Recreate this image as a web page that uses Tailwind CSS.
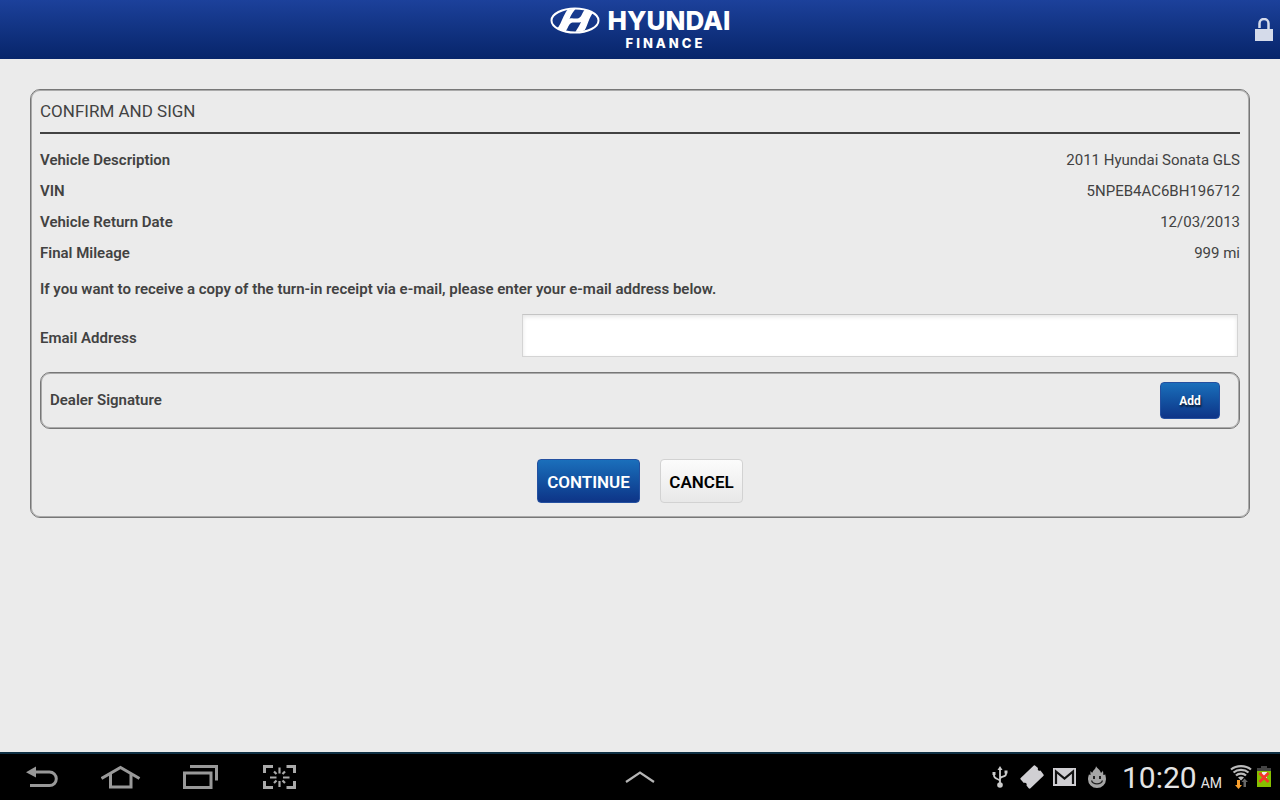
<!DOCTYPE html>
<html lang="en">
<head>
    <meta charset="UTF-8">
    <meta name="viewport" content="width=device-width, initial-scale=1.0">
    <title>Confirm and Sign</title>
    <script src="https://cdn.jsdelivr.net/npm/@tailwindcss/browser@4"></script>
</head>
<body class="min-h-screen flex flex-col bg-[#ebebeb] text-[#424242] text-[15px] leading-5 font-['Roboto',sans-serif]">
    <!-- Header -->
    <header class="h-[59px] shrink-0 grid grid-cols-[1fr_auto_1fr] bg-linear-to-b from-[#1c419b] to-[#07256a] text-white">
        <div class="col-start-2 flex gap-2 pt-[7px]">
            <svg class="w-[50px] h-[27px]" viewBox="0 0 50 27" fill="none" aria-hidden="true">
                <ellipse cx="25" cy="13.5" rx="23.5" ry="12" stroke="#fff" stroke-width="2"/>
                <path fill="#fff" d="M17 3.2C13 9 12 15 7.500 21.200C10 23 12.500 24 15.500 24.500C18 21 18.500 17.500 21 16C24 14.500 28 16.500 31 15C29.500 18.500 27.500 21.500 25.500 24.800C29 24.800 32 24.500 34.500 23.600C38 18 38.500 11.500 43 5.800C40.500 4 37.500 3 35 2.500C31.500 6 32 10 28.500 11.200C25 12.300 22 10.300 19.500 11.800C21 8 23 5 25.500 2C22 2 19 2.500 17 3.200Z"/>
            </svg>
            <div class="flex flex-col font-['Inter',sans-serif]">
                <span class="h-7 text-[26px] leading-[27px] font-extrabold">HYUNDAI</span>
                <span class="pl-[18px] text-[13px] leading-4 font-extrabold tracking-[3px]">FINANCE</span>
            </div>
        </div>
        <button type="button" aria-label="Unlock" class="justify-self-end self-center pr-[7px]">
            <svg class="w-[18px] h-6" viewBox="0 0 18 24" fill="none" aria-hidden="true">
                <path d="M4.500 10V5.500a4.500 4.500 0 0 1 9 0v6" stroke="#d5dbea" stroke-width="2.500"/>
                <path d="M0 11h18v12H0z" fill="#d5dbea"/>
            </svg>
        </button>
    </header>

    <!-- Confirm form -->
    <main class="flex-1 p-[30px]">
        <form class="border border-[#777] inset-shadow-[0_0_0_1px_#aaa] rounded-[10px] pt-px px-[9px] pb-[14px]">
            <h1 class="h-[43px] flex items-center pb-0.5 border-b-2 border-[#424242] text-[17px]">CONFIRM AND SIGN</h1>
            <dl class="pt-[10px]">
                <div class="h-[31px] flex items-center justify-between">
                    <dt class="font-semibold">Vehicle Description</dt>
                    <dd>2011 Hyundai Sonata GLS</dd>
                </div>
                <div class="h-[31px] flex items-center justify-between">
                    <dt class="font-semibold">VIN</dt>
                    <dd>5NPEB4AC6BH196712</dd>
                </div>
                <div class="h-[31px] flex items-center justify-between">
                    <dt class="font-semibold">Vehicle Return Date</dt>
                    <dd>12/03/2013</dd>
                </div>
                <div class="h-[31px] flex items-center justify-between">
                    <dt class="font-semibold">Final Mileage</dt>
                    <dd>999 mi</dd>
                </div>
            </dl>
            <p class="pt-[11px] font-semibold">If you want to receive a copy of the turn-in receipt via e-mail, please enter your e-mail address below.</p>
            <div class="mt-[15px] flex items-center">
                <label for="email" class="w-2/5 pt-1 font-semibold">Email Address</label>
                <input id="email" type="email" class="flex-1 mx-0.5 h-[43px] px-2 bg-white border border-[#d4d4d4] border-t-[#c4c4c4] shadow-[inset_0_2px_4px_rgba(0,0,0,0.1)] outline-none">
            </div>
            <div class="mt-[15px] pl-[9px] pr-[19px] h-[57px] flex items-center justify-between border border-[#777] inset-shadow-[0_0_0_1px_#aaa] rounded-[10px]">
                <span class="pb-0.5 font-semibold">Dealer Signature</span>
                <button type="button" class="w-[60px] h-[37px] rounded border border-[#2450a0] bg-linear-to-b from-[#1b6fbb] to-[#0e3487] text-white text-xs font-bold text-shadow-[1px_2px_2px_rgba(0,0,0,0.7)]">Add</button>
            </div>
            <div class="mt-[30px] flex justify-center gap-5 text-[17px] font-semibold">
                <button type="submit" class="h-11 w-[103px] pt-0.5 rounded border border-[#2450a0] bg-linear-to-b from-[#1b6fbb] to-[#0e3487] text-white">CONTINUE</button>
                <button type="button" class="h-11 w-[83px] pt-0.5 rounded border border-[#d2d2d2] bg-linear-to-b from-[#fcfcfc] to-[#e8e8e8] text-black">CANCEL</button>
            </div>
        </form>
    </main>

    <!-- System bar -->
    <footer class="h-12 shrink-0 grid grid-cols-[1fr_auto_1fr] items-center bg-black border-t-2 border-[#0f3044] text-[#e4e4e4]">
        <nav class="flex items-center gap-[42px] pl-[25px]">
            <button type="button" aria-label="Back">
                <svg class="w-[34px] h-6" viewBox="0 0 34 24" fill="none" aria-hidden="true">
                    <path d="M9 7h15.500a6.800 6.800 0 0 1 0 13.600H5" stroke="#999" stroke-width="3"/>
                    <path d="M1 7.200 11 1.500v11z" fill="#999"/>
                </svg>
            </button>
            <button type="button" aria-label="Home">
                <svg class="w-10 h-6" viewBox="0 0 40 24" fill="none" stroke="#999" stroke-width="3" aria-hidden="true">
                    <path d="M.500 13.500 19.500 2.500 38.500 13.500M9.500 9v13h20.500V9"/>
                </svg>
            </button>
            <button type="button" aria-label="Recent apps">
                <svg class="w-9 h-6" viewBox="0 0 36 24" fill="none" stroke="#999" stroke-width="3" aria-hidden="true">
                    <path d="M1.500 8h26.500v14.500h-26.500zM7 1.500h26.500v14"/>
                </svg>
            </button>
            <button type="button" aria-label="Screenshot" class="pl-0.5">
                <svg class="w-[34px] h-6" viewBox="0 0 34 24" fill="none" stroke="#aaa" aria-hidden="true">
                    <path d="M1.500 8V1.500h8.500M23.500 1.500h8V8M31.500 16v6.500h-8M10 22.500H1.500V16" stroke-width="3"/>
                    <path d="M16.500 2.500v6M16.500 16v6M7 12.500h6.500M20 12.500h6.500M11 6.500l2.500 2.500M22 6.500l-2.500 2.500M11 18l2.500-2.500M22 18l-2.500-2.500" stroke-width="2.200"/>
                </svg>
            </button>
        </nav>
        <button type="button" aria-label="Expand">
            <svg class="w-[30px] h-3" viewBox="0 0 30 12" fill="none" stroke="#b5b5b5" stroke-width="2.200" aria-hidden="true">
                <path d="M1 11 15 1.500 29 11"/>
            </svg>
        </button>
        <div class="flex items-center justify-end pr-[9px]">
            <svg class="w-4 h-[22px] mr-3" viewBox="0 0 16 22" fill="none" stroke="#ccc" stroke-width="1.800" aria-hidden="true">
                <path d="M8 3v16M8 15.500c0-3-6-2-6-6V7M8 13c0-3 6-1.500 6-5V6"/>
                <path d="M8 0l2.500 4h-5zM.500 6h3v3h-3zM12.500 4.500h3v3h-3z" fill="#ccc" stroke="none"/>
                <circle cx="8" cy="19" r="2.800" fill="#ccc" stroke="none"/>
            </svg>
            <svg class="w-6 h-6 mr-[9px]" viewBox="0 0 24 24" fill="#d0cfd3" aria-hidden="true">
                <path d="M15 .500 18 3c-.800 2 .500 3.300 2.500 2.500L23.500 9.500c.400.600.300 1-.200 1.500L10.500 23.200c-.700.600-1.300.600-1.800 0L6.500 20.500c.800-2-.700-3.300-2.700-2.500L.700 14.500c-.500-.600-.500-1 0-1.500L13.500.800C14 .300 14.500.100 15 .500Z"/>
            </svg>
            <svg class="w-[23px] h-[18px] mr-3" viewBox="0 0 23 18" aria-hidden="true">
                <path fill="#d0cfd3" d="M0 0h23v18H0z"/>
                <path d="M3 16V3.500l8.500 7 8.500-7V16" fill="none" stroke="#111" stroke-width="2.200"/>
            </svg>
            <svg class="w-[18px] h-[22px] mr-4" viewBox="0 0 18 22" aria-hidden="true">
                <path fill="#a6a6a6" d="M8 0c.500 2 4.500 3.500 4.800 6.800C14 6.500 14.500 5.500 14.800 4.500 15.500 6 15 7.500 15.500 9c.700.200 1.300-.200 1.700-.800.300 2 .8 3 .8 5a9 8.800 0 0 1-18 0c0-2 .500-3 1-5 .300.600.800.900 1.500.800C2.500 7.500 2.200 6 2.800 5c.400 1 1 1.500 1.700 1.500C5 4 8 3 8 0Z"/>
                <path d="M6 10v3M12 10v3" stroke="#222" stroke-width="2"/>
                <path d="M3.500 14.500c1.500 4.500 9.500 4.500 11 0" fill="none" stroke="#222" stroke-width="1.200"/>
            </svg>
            <div class="flex items-baseline gap-1 pt-0.5">
                <span class="text-[30px] leading-8">10:20</span>
                <span class="text-sm">AM</span>
            </div>
            <svg class="w-[22px] h-6 ml-2 mr-[5px]" viewBox="0 0 22 24" fill="none" aria-hidden="true">
                <path d="M1 4.500c5.500-4.500 14.500-4.500 20 0M3.500 7.500c4-3.500 11-3.500 15 0M6 10.500c2.500-2.500 7.500-2.500 10 0" stroke="#bbb" stroke-width="2.200"/>
                <path d="M8 12.500c1.500-1.500 4.500-1.500 6 0L11 15.500z" fill="#bbb"/>
                <path d="M7 15h3v5h2l-3.500 4L5 20h2z" fill="#f9a02d"/>
                <path d="M13.500 22v-5h-2L14.500 13.500l3.500 3.500h-2v5z" fill="#666"/>
            </svg>
            <svg class="w-[14px] h-[22px]" viewBox="0 0 14 22" fill="none" aria-hidden="true">
                <path d="M4 0h6v2h4v3H0V2h4z" fill="#444"/>
                <path d="M0 5h14v16H0z" fill="#86bf00"/>
                <path d="M5 6h5v6H5z" fill="#eee"/>
                <path d="M2.500 7 11.500 16M11.500 7 2.500 16" stroke="#f4372a" stroke-width="2.800"/>
            </svg>
        </div>
    </footer>
</body>
</html>
